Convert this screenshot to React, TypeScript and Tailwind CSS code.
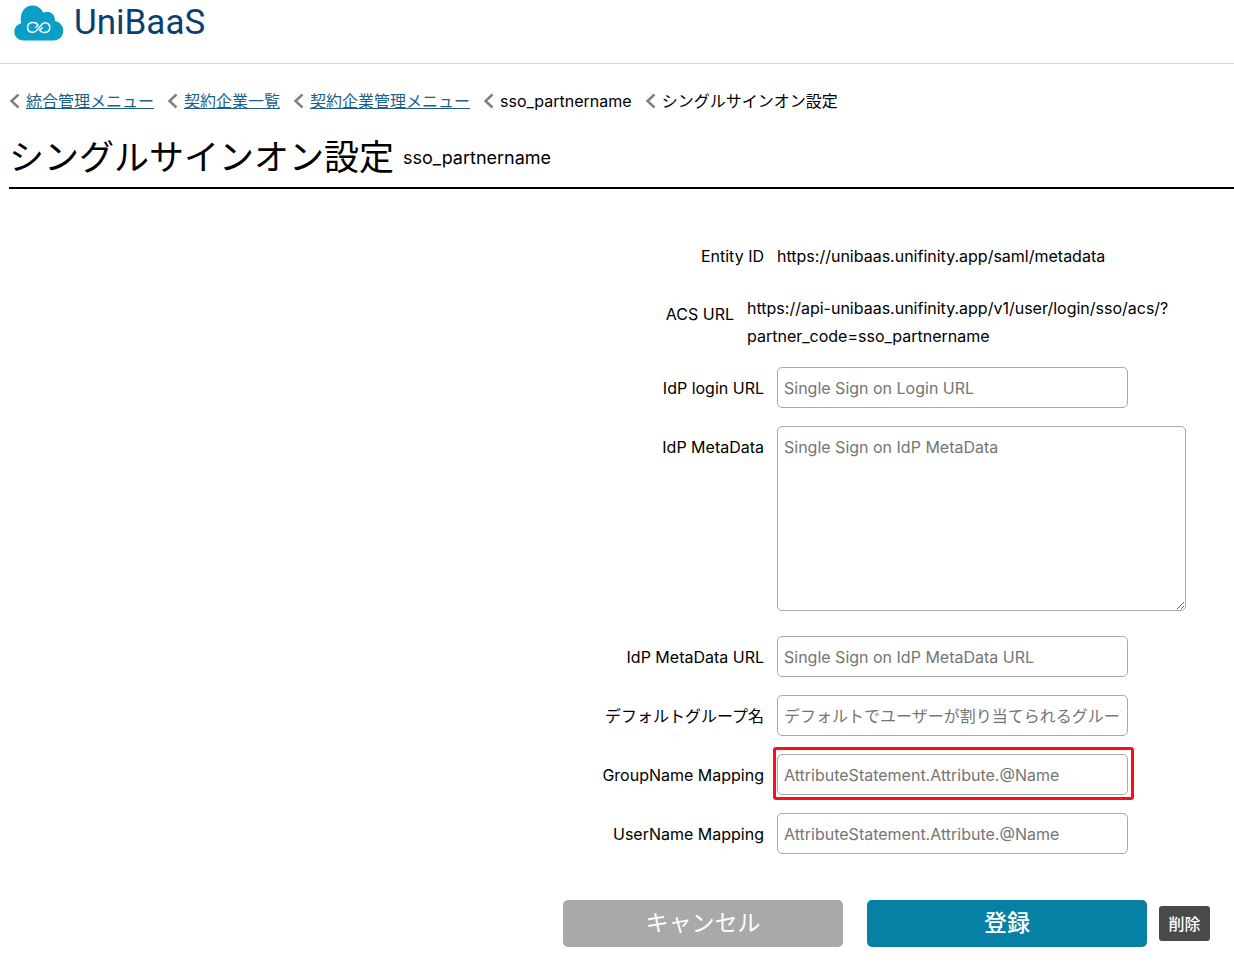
import React from "react";

const crumbs = [
  { label: "統合管理メニュー", link: true },
  { label: "契約企業一覧", link: true },
  { label: "契約企業管理メニュー", link: true },
  { label: "sso_partnername", link: false },
  { label: "シングルサインオン設定", link: false },
];

const inputClass =
  "h-[41px] w-[351px] rounded-[5px] border border-[#a9a9a9] bg-white px-[6px] placeholder:text-[#757575]";

function Logo() {
  return (
    <a href="#" className="flex w-fit items-center gap-[10px] text-[#0b3f70]">
      <svg width="50" height="36" viewBox="0 0 50 36" aria-hidden="true">
        <path
          d="M9.5 35.500C4 35.500 0.300 31.600 0.300 26.800C0.300 22.500 3.200 19.300 7.200 18.300C5.300 9 10 0.900 17.700 0.600C23 0.400 27 3.100 29.200 7.600C35.500 5.100 41.500 9.300 41 15.900C46 16.800 49.300 20.800 49.300 25.600C49.300 31.500 45 35.500 39.500 35.500Z"
          fill="#0b9fc8"
        />
        <path
          d="M21.800 22.300L24 20.200C21.500 15.800 13.600 16.800 13.600 22.400C13.600 27.600 19.600 28.600 22.600 25.400L27.800 19.500C30.800 16.400 35.800 18 35.800 22.400C35.800 27.800 28.600 29.200 25.600 25.400L28.300 22.700"
          fill="none"
          stroke="#fff"
          strokeWidth="1.500"
          strokeLinecap="round"
          strokeLinejoin="round"
        />
      </svg>
      <span className="font-['Roboto',sans-serif] text-[35px] leading-[40px]">UniBaaS</span>
    </a>
  );
}

function Chevron() {
  return (
    <svg width="11" height="16" viewBox="0 0 11 16" aria-hidden="true">
      <path d="M9.500 1.500L2.500 8L9.500 14.500" fill="none" stroke="#808080" strokeWidth="2.500" />
    </svg>
  );
}

function Row({ id, label, children }: { id: string; label: string; children: React.ReactNode }) {
  return (
    <div className="flex gap-[13px]">
      <label htmlFor={id} className="w-[201px] text-right leading-[42px]">
        {label}
      </label>
      {children}
    </div>
  );
}

export default function App() {
  return (
    <div className="font-['Inter','Noto_Sans_CJK_JP',sans-serif] text-[16px] text-black">
      <header className="border-b border-[#d9d9d9] pt-[3px] pb-[20px] pl-[14px]">
        <Logo />
      </header>
      <main className="pb-[22px] pl-[9px]">
        <nav aria-label="breadcrumb" className="flex gap-[13px] pt-[25px] leading-[24px]">
          {crumbs.map((c) => (
            <span key={c.label} className="flex items-center gap-[6px] whitespace-nowrap">
              <Chevron />
              {c.link ? (
                <a href="#" className="text-[#1b5d8b] underline">
                  {c.label}
                </a>
              ) : (
                <span>{c.label}</span>
              )}
            </span>
          ))}
        </nav>
        <div className="flex items-center gap-[9px] border-b-2 border-black pt-[20px] pb-[5px]">
          <h1 className="text-[35px] leading-[49px]">シングルサインオン設定</h1>
          <span className="text-[18px]">sso_partnername</span>
        </div>
        <form className="flex flex-col items-end pt-[47px] pr-[24px]" onSubmit={(e) => e.preventDefault()}>
          <div className="flex w-[647px] flex-col gap-[17px]">
            <div className="flex gap-[13px] leading-[41px]">
              <span className="w-[201px] text-right">Entity ID</span>
              <span>https://unibaas.unifinity.app/saml/metadata</span>
            </div>
            <div className="flex gap-[13px]">
              <span className="w-[171px] text-right leading-[41px]">ACS URL</span>
              <span className="w-[440px] leading-[28px]">
                https://api-unibaas.unifinity.app/v1/user/login/sso/acs/?
                <wbr />
                partner_code=sso_partnername
              </span>
            </div>
            <Row id="idp-login" label="IdP login URL">
              <input id="idp-login" type="text" className={inputClass} placeholder="Single Sign on Login URL" />
            </Row>
            <div className="pb-[8px]">
              <Row id="idp-metadata" label="IdP MetaData">
                <textarea
                  id="idp-metadata"
                  className="h-[185px] w-[409px] rounded-[5px] border border-[#a9a9a9] bg-white px-[6px] py-[8px] leading-[24px] placeholder:text-[#757575]"
                  placeholder="Single Sign on IdP MetaData"
                />
              </Row>
            </div>
            <Row id="idp-metadata-url" label="IdP MetaData URL">
              <input id="idp-metadata-url" type="text" className={inputClass} placeholder="Single Sign on IdP MetaData URL" />
            </Row>
            <Row id="default-group" label="デフォルトグループ名">
              <input
                id="default-group"
                type="text"
                className={inputClass}
                placeholder="デフォルトでユーザーが割り当てられるグループ名"
              />
            </Row>
            <Row id="group-mapping" label="GroupName Mapping">
              <div className="relative">
                <input
                  id="group-mapping"
                  type="text"
                  className={inputClass}
                  placeholder="AttributeStatement.Attribute.@Name"
                />
                <span className="pointer-events-none absolute -top-[7px] -right-[6px] -bottom-[4px] -left-[4px] rounded-[3px] border-3 border-[#fd0d1b]" />
              </div>
            </Row>
            <Row id="user-mapping" label="UserName Mapping">
              <input id="user-mapping" type="text" className={inputClass} placeholder="AttributeStatement.Attribute.@Name" />
            </Row>
          </div>
          <div className="flex items-center pt-[45px] text-white">
            <button type="button" className="mr-[24px] h-[47px] w-[280px] rounded-[5px] bg-[#a9a9a9] text-[23px]">
              キャンセル
            </button>
            <button type="submit" className="mr-[12px] h-[47px] w-[280px] rounded-[5px] bg-[#0680a4] text-[23px] font-medium">
              登録
            </button>
            <button type="button" className="h-[35px] w-[51px] rounded-[3px] bg-[#4a4a4a] text-[16px] font-medium">
              削除
            </button>
          </div>
        </form>
      </main>
    </div>
  );
}
